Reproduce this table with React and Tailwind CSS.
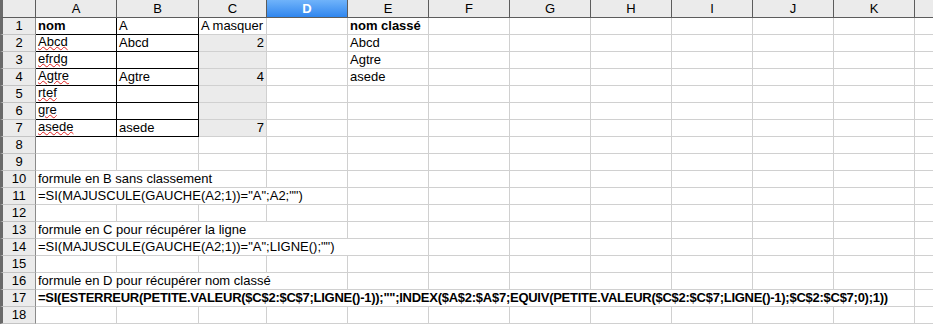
import React from "react";

const cols = [
  { n: "A", w: 81 },
  { n: "B", w: 82 },
  { n: "C", w: 68 },
  { n: "D", w: 81 },
  { n: "E", w: 81 },
  { n: "F", w: 81 },
  { n: "G", w: 81 },
  { n: "H", w: 81 },
  { n: "I", w: 81 },
  { n: "J", w: 81 },
  { n: "K", w: 81 },
  { n: "", w: 81 },
];

// cell contents: row -> { col index: {t, bold, right, wavy} }, span = how many columns A's text runs across
const rows = {
  1: { cells: { 0: { t: "nom", bold: true }, 1: { t: "A" }, 2: { t: "A masquer" }, 4: { t: "nom classé", bold: true } } },
  2: { cells: { 0: { t: "Abcd", wavy: true }, 1: { t: "Abcd" }, 2: { t: "2", right: true }, 4: { t: "Abcd" } } },
  3: { cells: { 0: { t: "efrdg", wavy: true }, 4: { t: "Agtre" } } },
  4: { cells: { 0: { t: "Agtre", wavy: true }, 1: { t: "Agtre" }, 2: { t: "4", right: true }, 4: { t: "asede" } } },
  5: { cells: { 0: { t: "rtef", wavy: true } } },
  6: { cells: { 0: { t: "gre", wavy: true } } },
  7: { cells: { 0: { t: "asede", wavy: true }, 1: { t: "asede" }, 2: { t: "7", right: true } } },
  10: { span: 3, cells: { 0: { t: "formule en B sans classement" } } },
  11: { span: 4, cells: { 0: { t: '=SI(MAJUSCULE(GAUCHE(A2;1))="A";A2;"")' } } },
  13: { span: 4, cells: { 0: { t: "formule en C pour récupérer la ligne" } } },
  14: { span: 5, cells: { 0: { t: '=SI(MAJUSCULE(GAUCHE(A2;1))="A";LIGNE();"")' } } },
  16: { span: 4, cells: { 0: { t: "formule en D pour récupérer nom classé" } } },
  17: {
    span: 11,
    cells: {
      0: {
        t: '=SI(ESTERREUR(PETITE.VALEUR($C$2:$C$7;LIGNE()-1));"";INDEX($A$2:$A$7;EQUIV(PETITE.VALEUR($C$2:$C$7;LIGNE()-1);$C$2:$C$7;0);1))',
        bold: true,
        tight: true,
      },
    },
  },
};

function HeaderRow() {
  return (
    <div className="flex h-[18px]">
      <div className="w-[36px] shrink-0 border-l-[3px] border-l-[#6a6a6a] border-r border-b border-[#5c5c5c] bg-[#ebebeb]" />
      {cols.map((c, i) => (
        <div
          key={i}
          style={{ width: c.w }}
          className={
            c.n === "D"
              ? "shrink-0 flex items-center justify-center border-r border-b border-[#5c5c5c] bg-linear-to-b from-[#6fb3fa] to-[#2f86ee] text-white font-bold"
              : "shrink-0 flex items-center justify-center border-r border-b border-[#5c5c5c] bg-[#ebebeb] text-black"
          }
        >
          {c.n}
        </div>
      ))}
    </div>
  );
}

function Row({ r }) {
  const def = rows[r] || { cells: {} };
  const span = def.span || 1;
  const boxed = r >= 1 && r <= 7;
  const out = [];

  for (let i = 0; i < cols.length; i++) {
    let w = cols[i].w;
    if (i === 0 && span > 1) {
      for (let j = 1; j < span; j++) w += cols[j].w;
    }
    const cell = def.cells[i];
    const shaded = i === 2 && r >= 2 && r <= 7;

    let border = "border-r border-b border-[#d0d0d0]";
    if (boxed && i <= 1) border = "border-r border-b border-black";

    out.push(
      <div
        key={i}
        style={{ width: w }}
        className={`shrink-0 h-full flex items-center px-[2px] whitespace-nowrap overflow-visible ${border} ${
          shaded ? "bg-[#ebebeb]" : ""
        } ${cell && cell.right ? "justify-end" : ""}`}
      >
        {cell && (
          <span
            className={`${cell.bold ? "font-bold" : ""} ${cell.tight ? "tracking-[-0.26px]" : ""} ${
              cell.wavy
                ? "-mt-[2px] underline decoration-wavy decoration-[#e02020] decoration-1 underline-offset-0"
                : ""
            }`}
          >
            {cell.t}
          </span>
        )}
      </div>
    );
    if (i === 0 && span > 1) i += span - 1;
  }

  return (
    <div className="flex h-[17px]">
      <div className="w-[36px] shrink-0 flex items-center justify-center border-l-[3px] border-l-[#6a6a6a] border-r border-r-[#8a8a8a] border-b border-b-[#c4c4c4] bg-[#ebebeb] text-black">
        {r}
      </div>
      {out}
    </div>
  );
}

export default function App() {
  const nums = Array.from({ length: 18 }, (_, i) => i + 1);
  return (
    <div
      className="w-[933px] h-[325px] overflow-hidden bg-white text-[13px] leading-[16px] text-black"
      style={{ fontFamily: '"Liberation Sans", Arial, sans-serif' }}
    >
      <HeaderRow />
      {nums.map((r) => (
        <Row key={r} r={r} />
      ))}
    </div>
  );
}
